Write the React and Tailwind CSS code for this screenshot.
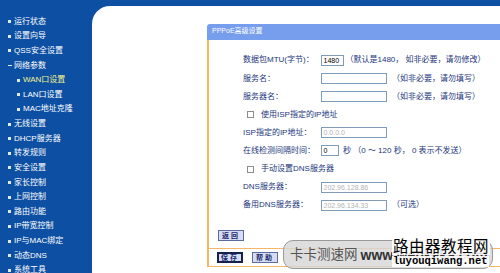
import React from "react";

const menu = [
  { t: "运行状态", lvl: 0 },
  { t: "设置向导", lvl: 0 },
  { t: "QSS安全设置", lvl: 0 },
  { t: "网络参数", lvl: 0, open: true },
  { t: "WAN口设置", lvl: 1, active: true },
  { t: "LAN口设置", lvl: 1 },
  { t: "MAC地址克隆", lvl: 1 },
  { t: "无线设置", lvl: 0 },
  { t: "DHCP服务器", lvl: 0 },
  { t: "转发规则", lvl: 0 },
  { t: "安全设置", lvl: 0 },
  { t: "家长控制", lvl: 0 },
  { t: "上网控制", lvl: 0 },
  { t: "路由功能", lvl: 0 },
  { t: "IP带宽控制", lvl: 0 },
  { t: "IP与MAC绑定", lvl: 0 },
  { t: "动态DNS", lvl: 0 },
  { t: "系统工具", lvl: 0 },
];

function Input({ w, value, grey }) {
  return (
    <div
      className={`h-[11px] ${w} shrink-0 bg-white border border-[#7f9db9] flex items-center pl-[2px] text-[7px] leading-none ${
        grey ? "text-[#b4b4b4]" : "text-black"
      } font-['Liberation_Sans',sans-serif]`}
    >
      {value}
    </div>
  );
}

function Row({ label, children }) {
  return (
    <div className="h-[18.1px] flex items-center">
      <div className="w-[77.5px] shrink-0 whitespace-nowrap">{label}</div>
      {children}
    </div>
  );
}

function Check({ label }) {
  return (
    <div className="h-[18.1px] flex items-center pl-[4px]">
      <div className="w-[7px] h-[7px] border border-[#8c8c8c] bg-white shrink-0" />
      <div className="ml-[7px] whitespace-nowrap">{label}</div>
    </div>
  );
}

function Btn({ children, strong }) {
  return (
    <div
      className={`h-[11px] w-[26px] flex items-center justify-center text-[7px] leading-none font-bold tracking-[2px] text-[#1a2a6a] bg-[#d5dcf3] ${
        strong ? "border-2 border-[#16214a]" : "border border-[#5b6b9c]"
      }`}
    >
      {children}
    </div>
  );
}

export default function App() {
  return (
    <div className="w-[500px] h-[273px] bg-[#0d4fa3] flex overflow-hidden relative font-['Liberation_Sans','Noto_Sans_CJK_SC',sans-serif]">
      <nav className="w-[92px] shrink-0 pt-[14.4px] flex flex-col">
        {menu.map((m) => (
          <div
            key={m.t}
            className={`h-[14.63px] shrink-0 flex items-center text-[8px] leading-none whitespace-nowrap ${
              m.lvl ? "pl-[17px]" : "pl-[8px]"
            } ${m.active ? "text-[#f4f48a]" : "text-white"}`}
          >
            {m.open ? (
              <div className="w-[4px] h-[1.5px] bg-[#dfeadb] shrink-0" />
            ) : (
              <div className="w-[3px] h-[3px] bg-[#dfeadb] shrink-0" />
            )}
            <span className={m.open ? "ml-[2px]" : "ml-[3px]"}>{m.t}</span>
          </div>
        ))}
      </nav>

      <div className="flex-1 mt-[6px] bg-white rounded-tl-[18px] pl-[115px] pt-[18px] overflow-hidden">
        <section className="w-[320px] flex flex-col text-[8px] leading-none text-[#1a357c]">
          <div className="h-[16px] bg-[#779ded] rounded-tl-[3px] pl-[5px] pt-[3px] text-white text-[7px] leading-none">
            PPPoE高级设置
          </div>
          <div className="border-l-2 border-b border-[#f4b766] flex flex-col">
            <div className="pl-[34px] pt-[11.4px] flex flex-col">
              <Row label="数据包MTU(字节)：">
                <Input w="w-[23px]" value="1480" />
                <span className="ml-[2px] whitespace-nowrap">（默认是1480， 如非必要，请勿修改）</span>
              </Row>
              <Row label="服务名：">
                <Input w="w-[66.5px]" value="" />
                <span className="ml-[5px] whitespace-nowrap">（如非必要，请勿填写）</span>
              </Row>
              <Row label="服务器名：">
                <Input w="w-[66.5px]" value="" />
                <span className="ml-[5px] whitespace-nowrap">（如非必要，请勿填写）</span>
              </Row>
              <Check label="使用ISP指定的IP地址" />
              <Row label="ISP指定的IP地址：">
                <Input w="w-[66.5px]" value="0.0.0.0" grey />
              </Row>
              <Row label="在线检测间隔时间：">
                <Input w="w-[18px]" value="0" />
                <span className="ml-[4.5px] whitespace-nowrap">秒 （0 ～ 120 秒， 0 表示不发送）</span>
              </Row>
              <Check label="手动设置DNS服务器" />
              <Row label="DNS服务器：">
                <Input w="w-[66.5px]" value="202.96.128.86" grey />
              </Row>
              <Row label="备用DNS服务器：">
                <Input w="w-[66.5px]" value="202.96.134.33" grey />
                <span className="ml-[5px] whitespace-nowrap">（可选）</span>
              </Row>
            </div>
            <div className="pl-[9px] pt-[15.5px] pb-[7px]">
              <Btn>返回</Btn>
            </div>
            <div className="border-t border-[#f4b766] pl-[8px] pt-[3px] pb-[3px] flex gap-[9px]">
              <Btn strong>保存</Btn>
              <Btn>帮助</Btn>
            </div>
          </div>
        </section>
      </div>

      <div className="absolute left-[283px] top-[240px] w-[210px] h-[29px] rounded-[10px] border border-[#9a9a9a] bg-[#d6d6d6]/80 flex items-center pl-[6px] whitespace-nowrap">
        <span className="text-[13.5px] leading-none text-[#555]">卡卡测速网</span>
        <span className="ml-[3px] text-[14px] leading-none font-bold text-[#333] font-['Liberation_Sans',sans-serif]">
          www.webkaka.com
        </span>
      </div>
      <div className="absolute left-[392px] top-[238px] flex flex-col items-start">
        <span className="bg-white/85 px-[1px] text-[15.5px] leading-[17px] tracking-[0.5px] text-black">路由器教程网</span>
        <span className="mt-[1px] bg-white/90 px-[1px] text-[10.5px] leading-[11px] font-bold text-black font-['Liberation_Mono',monospace]">
          luyouqiwang.net
        </span>
      </div>
    </div>
  );
}
